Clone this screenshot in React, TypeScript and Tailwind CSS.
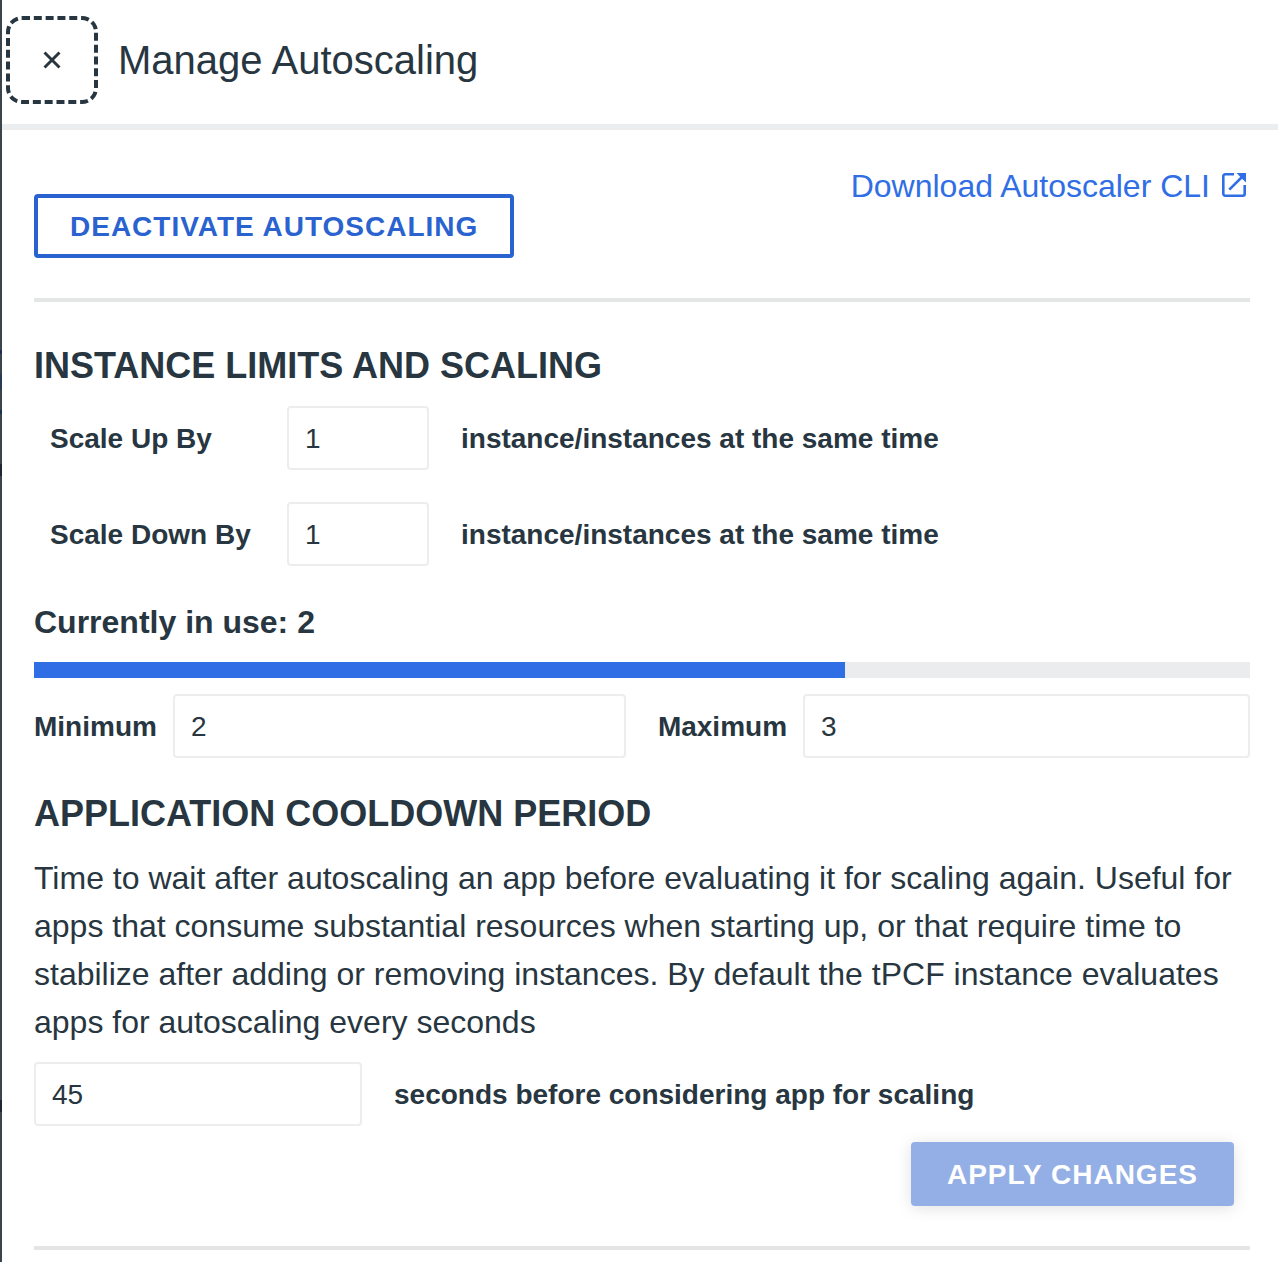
import React from "react";

function CloseIcon() {
  return (
    <svg viewBox="0 0 18 18" className="size-[18px]" fill="none" stroke="currentColor" strokeWidth="2.9" aria-hidden="true">
      <path d="M1.5 1.5L16.5 16.5M16.5 1.5L1.5 16.5" />
    </svg>
  );
}

function OpenInNewIcon() {
  return (
    <svg viewBox="0 0 24 24" className="mx-1 -mt-0.5 size-6" fill="none" stroke="currentColor" strokeWidth="2.6" aria-hidden="true">
      <path d="M12 1.3H3.2a1.9 1.9 0 0 0-1.9 1.9v17.6a1.9 1.9 0 0 0 1.9 1.9h17.6a1.9 1.9 0 0 0 1.9-1.9V12" />
      <path d="M7.3 16.7L21 3" />
      <path d="M14.6 0H24v9.4L20.9 6.6 17.4 3.1z" fill="currentColor" stroke="none" />
    </svg>
  );
}

function NumberField({ value, label, className }: { value: string; label: string; className: string }) {
  return (
    <input
      aria-label={label}
      defaultValue={value}
      className={`h-16 rounded border-2 border-[#ecedee] bg-white px-4 pt-0.5 text-[28px] outline-none ${className}`}
    />
  );
}

function ScaleRow({ label, value }: { label: string; value: string }) {
  return (
    <div className="flex items-center pl-4 text-[28px] font-bold">
      <span className="w-[237px] pt-0.5">{label}</span>
      <NumberField label={label} value={value} className="w-[142px] font-normal" />
      <span className="ml-8 pt-0.5">instance/instances at the same time</span>
    </div>
  );
}

export default function App() {
  const used = 2;
  const maximum = 3;
  return (
    <div className="flex h-[1262px] w-[1278px] overflow-hidden bg-white font-['Liberation_Sans',Arial,sans-serif] text-[#273640]">
      <div className="w-0.5 shrink-0 bg-[#3a444d]">
        <div className="mt-[350px] h-1 bg-[#1c3053]" />
        <div className="mt-5 h-4 bg-[#2b3a54]" />
        <div className="mt-5 h-1 bg-[#1c3053]" />
        <div className="mt-[50px] h-3 bg-[#1c2733]" />
        <div className="mt-[624px] h-3 bg-[#1c2733]" />
      </div>
      <div className="min-w-0 flex-1">
        <header className="flex h-[130px] items-start border-b-6 border-[#ecedee] pt-4 pl-1">
          <button aria-label="Close" className="flex h-[88px] w-[92px] items-center justify-center rounded-[16px] border-4 border-dashed border-[#273640]">
            <CloseIcon />
          </button>
          <h1 className="ml-5 text-[40px] leading-[88px]">Manage Autoscaling</h1>
        </header>

        <main className="pr-7 pl-8">
          <section className="flex h-[172px] items-start justify-between border-b-4 border-[#e4e5e5]">
            <button className="mt-16 h-16 rounded border-4 border-[#2a63d0] px-8 pt-0.5 text-[28px] font-bold tracking-[1px] text-[#2a63d0]">
              DEACTIVATE AUTOSCALING
            </button>
            <a href="#" className="mt-8 flex items-center gap-2 text-[32px] leading-[48px] text-[#306ee6]">
              Download Autoscaler CLI
              <OpenInNewIcon />
            </a>
          </section>

          <section className="pt-10">
            <h2 className="text-[36px] leading-[48px] font-bold">INSTANCE LIMITS AND SCALING</h2>
            <div className="mt-4 flex flex-col gap-8">
              <ScaleRow label="Scale Up By" value="1" />
              <ScaleRow label="Scale Down By" value="1" />
            </div>
            <h3 className="mt-8 text-[32px] leading-[48px] font-bold">Currently in use: {used}</h3>
            <div className="mt-4 h-4 bg-[#ebecee]">
              <div className="h-full bg-[#306ee6]" style={{ width: `${(used / maximum) * 100}%` }} />
            </div>
            <div className="mt-4 flex items-center text-[28px] font-bold">
              <span className="pt-0.5">Minimum</span>
              <NumberField label="Minimum" value="2" className="ml-4 w-[453px] font-normal" />
              <span className="ml-8 pt-0.5">Maximum</span>
              <NumberField label="Maximum" value="3" className="ml-4 min-w-0 flex-1 font-normal" />
            </div>
          </section>

          <section className="mt-8 border-b-4 border-[#e4e5e5] pb-10">
            <h2 className="text-[36px] leading-[48px] font-bold">APPLICATION COOLDOWN PERIOD</h2>
            <p className="mt-4 text-[32px] leading-[48px]">
              Time to wait after autoscaling an app before evaluating it for scaling again. Useful for
              apps that consume substantial resources when starting up, or that require time to
              stabilize after adding or removing instances. By default the tPCF instance evaluates
              apps for autoscaling every seconds
            </p>
            <div className="mt-4 flex items-center text-[28px] font-bold">
              <NumberField label="Cooldown seconds" value="45" className="w-[328px] font-normal" />
              <span className="ml-8 pt-0.5">seconds before considering app for scaling</span>
            </div>
            <div className="mt-4 flex justify-end pr-4">
              <button className="h-16 rounded bg-[#94afe6] px-9 pt-0.5 text-[28px] font-bold tracking-[1px] text-white shadow-[0_2px_16px_rgba(0,0,0,0.12)]">
                APPLY CHANGES
              </button>
            </div>
          </section>
        </main>
      </div>
    </div>
  );
}
